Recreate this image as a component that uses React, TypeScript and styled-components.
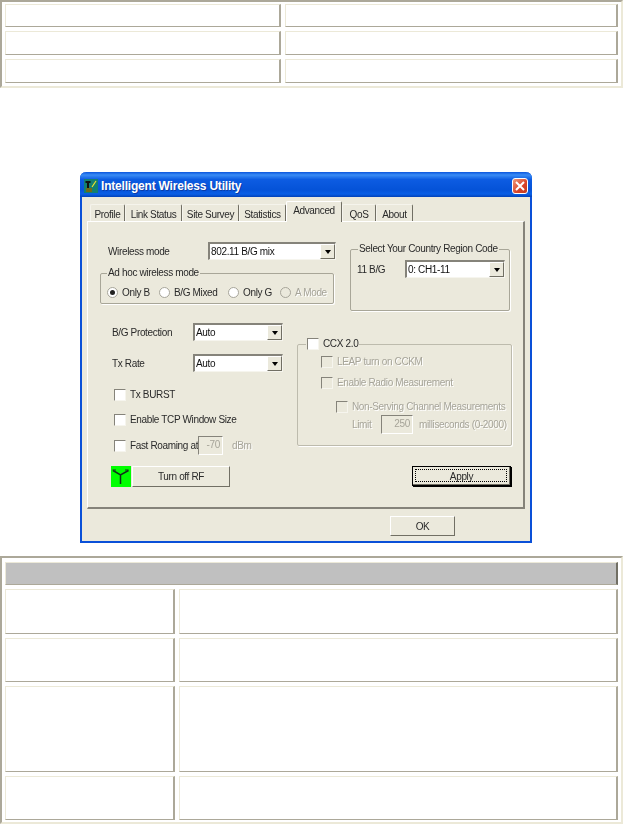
import React from 'react';
import styled, { createGlobalStyle } from 'styled-components';

const Global = createGlobalStyle`
  html, body {
    margin: 0;
    padding: 0;
    background: #fff;
  }
`;

const Page = styled.div`
  width: 623px;
  height: 824px;
  overflow: hidden;
`;

// old style html tables with outset borders
const OuterTable = styled.div<{ $h: number; $top: number; $columns: string; $padTop: number }>`
  box-sizing: border-box;
  height: ${p => p.$h}px;
  margin-top: ${p => p.$top}px;
  padding: ${p => p.$padTop}px 3px 0;
  border-top: 2px solid #aca899;
  border-left: 2px solid #aca899;
  border-right: 2px solid #ece9d8;
  border-bottom: 2px solid #ece9d8;
  display: grid;
  gap: 4px;
  grid-template-columns: ${p => p.$columns};
  grid-auto-rows: min-content;
`;

const Cell = styled.div<{ $h: number; $wide?: boolean }>`
  box-sizing: border-box;
  height: ${p => p.$h}px;
  grid-column: ${p => (p.$wide ? '1 / -1' : 'auto')};
  border-top: 1px solid #ece9d8;
  border-left: 1px solid #ece9d8;
  border-right: 2px solid #aca899;
  border-bottom: 1px solid #aca899;
  background: #fff;
`;

const HeadCell = styled(Cell)`
  background: #c0c0c0;
  border-right-color: #716f64;
`;

const Shot = styled.div`
  display: flex;
  justify-content: center;
  margin-top: 84px;
  padding-right: 12px;
  padding-left: 1px;
`;

const Win = styled.div`
  box-sizing: border-box;
  width: 452px;
  height: 371px;
  background: #ebe9dc;
  border: 2px solid #0a50d8;
  border-top: 0;
  border-radius: 6px 6px 0 0;
  display: flex;
  flex-direction: column;
  font-family: "Liberation Sans", Arial, sans-serif;
  font-size: 10px;
  letter-spacing: -0.35px;
  line-height: 13px;
  color: #2a2a2a;
  filter: blur(0.35px);
`;

const TitleBar = styled.div`
  height: 25px;
  margin: 0 -2px;
  border-radius: 6px 6px 0 0;
  background: linear-gradient(180deg, #0a55dd 0%, #3a8cf5 12%, #0d5ce2 30%, #0553d8 70%, #0a5fe6 88%, #0242b8 100%);
  display: flex;
  align-items: center;
  padding: 2px 4px 0 4px;
  gap: 3px;
  flex: none;
  box-sizing: border-box;
`;

const TitleText = styled.div`
  color: #fff;
  font-weight: bold;
  font-size: 12px;
  letter-spacing: -0.2px;
  margin-top: 2px;
  text-shadow: 1px 1px 0 #0a3ca8;
  flex: 1;
`;

const CloseBtn = styled.div`
  box-sizing: border-box;
  width: 16px;
  height: 16px;
  border: 1px solid #fff;
  border-radius: 3px;
  background: linear-gradient(135deg, #f09878, #d8442a 60%, #c03a20);
  display: flex;
  align-items: center;
  justify-content: center;
`;

const Body = styled.div`
  flex: 1;
  padding: 6px 5px 0 5px;
  display: flex;
  flex-direction: column;
`;

const TabRow = styled.div`
  display: flex;
  height: 18px;
  padding-left: 3px;
  position: relative;
  z-index: 1;
`;

const Tab = styled.div<{ $w: number; $active?: boolean }>`
  box-sizing: border-box;
  width: ${p => p.$w}px;
  height: ${p => (p.$active ? 21 : 17)}px;
  margin-top: ${p => (p.$active ? -2 : 1)}px;
  padding-top: ${p => (p.$active ? 2 : 3)}px;
  text-align: center;
  background: #ebe9dc;
  border-top: 1px solid ${p => (p.$active ? '#fff' : '#f5f4ec')};
  border-left: 1px solid ${p => (p.$active ? '#fff' : '#f5f4ec')};
  border-right: 1px solid #716f64;
  border-radius: 2px 2px 0 0;
  white-space: nowrap;
`;

const Panel = styled.div`
  box-sizing: border-box;
  width: 438px;
  height: 288px;
  border: 1px solid #fff;
  border-right: 2px solid #85837a;
  border-bottom: 2px solid #85837a;
  padding: 20px 0 0 12px;
`;

const TopSection = styled.div`
  display: grid;
  grid-template-columns: 234px 1fr;
  column-gap: 16px;
  height: 69px;
`;

const BottomSection = styled.div`
  display: grid;
  grid-template-columns: 197px 1fr;
`;

const Col = styled.div`
  display: flex;
  flex-direction: column;
`;

const Row = styled.div<{ $gap?: number; $top?: number; $left?: number }>`
  display: flex;
  align-items: center;
  gap: ${p => p.$gap ?? 0}px;
  margin-top: ${p => p.$top ?? 0}px;
  margin-left: ${p => p.$left ?? 0}px;
`;

const Label = styled.span<{ $w?: number; $off?: boolean; $left?: number }>`
  display: inline-block;
  width: ${p => (p.$w ? `${p.$w}px` : 'auto')};
  margin-left: ${p => p.$left ?? 0}px;
  flex: none;
  white-space: nowrap;
  color: ${p => (p.$off ? '#a6a499' : '#2a2a2a')};
  text-shadow: ${p => (p.$off ? '1px 1px 0 #fff' : 'none')};
`;

const Select = styled.div<{ $w: number }>`
  box-sizing: border-box;
  width: ${p => p.$w}px;
  height: 18px;
  flex: none;
  background: #fff;
  border-top: 2px solid #85837a;
  border-left: 2px solid #85837a;
  border-right: 1px solid #f6f5ee;
  border-bottom: 1px solid #f6f5ee;
  display: flex;
  align-items: center;
  justify-content: space-between;
  padding-left: 1px;
  color: #111;
`;

const Arrow = styled.div`
  box-sizing: border-box;
  width: 15px;
  height: 15px;
  background: #ebe9dc;
  border: 1px solid;
  border-color: #fff #716f64 #716f64 #fff;
  display: flex;
  align-items: center;
  justify-content: center;
  &::after {
    content: '';
    border: 3.5px solid transparent;
    border-top: 4px solid #000;
    border-bottom: 0;
  }
`;

const Group = styled.div<{ $w: number; $h: number; $top?: number; $left?: number; $faint?: boolean }>`
  box-sizing: border-box;
  position: relative;
  width: ${p => p.$w}px;
  height: ${p => p.$h}px;
  margin-top: ${p => p.$top ?? 0}px;
  margin-left: ${p => p.$left ?? 0}px;
  border: 1px solid ${p => (p.$faint ? '#bdbbad' : '#a8a698')};
  box-shadow: 1px 1px 0 #fff;
  border-radius: 2px;
`;

const Legend = styled.div<{ $left: number }>`
  position: absolute;
  top: -8px;
  left: ${p => p.$left}px;
  padding: 0 1px;
  background: #ebe9dc;
  white-space: nowrap;
  display: flex;
  align-items: center;
`;

const Radio = styled.span<{ $on?: boolean; $off?: boolean }>`
  box-sizing: border-box;
  width: 11px;
  height: 11px;
  flex: none;
  border-radius: 50%;
  border: 1px solid #a6a499;
  background: ${p => (p.$off ? '#ebe9dc' : '#fff')};
  display: flex;
  align-items: center;
  justify-content: center;
  margin-right: 4px;
  &::after {
    content: '';
    display: ${p => (p.$on ? 'block' : 'none')};
    width: 5px;
    height: 5px;
    border-radius: 50%;
    background: #222;
  }
`;

const Check = styled.span<{ $off?: boolean }>`
  box-sizing: border-box;
  width: 12px;
  height: 12px;
  flex: none;
  background: ${p => (p.$off ? '#ebe9dc' : '#fff')};
  border: 1px solid #85837a;
  border-right-color: #f6f5ee;
  border-bottom-color: #f6f5ee;
  margin-right: 4px;
`;

const NumBox = styled.div<{ $w: number }>`
  box-sizing: border-box;
  width: ${p => p.$w}px;
  height: 19px;
  flex: none;
  border: 1px solid #85837a;
  border-right-color: #fff;
  border-bottom-color: #fff;
  background: #ebe9dc;
  color: #a6a499;
  text-align: right;
  padding-right: 2px;
  line-height: 16px;
`;

const Btn = styled.div<{ $w: number; $h: number; $focus?: boolean; $left?: number; $top?: number }>`
  box-sizing: border-box;
  width: ${p => p.$w}px;
  height: ${p => p.$h}px;
  flex: none;
  margin-left: ${p => p.$left ?? 0}px;
  margin-top: ${p => p.$top ?? 0}px;
  background: #ebe9dc;
  border: 1px solid;
  border-color: ${p => (p.$focus ? '#000' : '#fff #716f64 #716f64 #fff')};
  box-shadow: ${p => (p.$focus ? 'inset -1px -1px 0 #716f64, 1px 1px 0 #000' : 'none')};
  display: flex;
  align-items: center;
  justify-content: center;
  position: relative;
  &::before {
    content: '';
    display: ${p => (p.$focus ? 'block' : 'none')};
    position: absolute;
    inset: 2px 3px 3px 2px;
    border: 1px dotted #000;
  }
`;

const AntennaTile = styled.div`
  width: 20px;
  height: 21px;
  flex: none;
  background: #00ff00;
  margin-right: 1px;
`;

const Footer = styled.div`
  display: flex;
  justify-content: flex-end;
  padding: 7px 70px 0 0;
`;

const TitleIcon = () => (
  <svg width="14" height="14" viewBox="0 0 14 14">
    <rect width="14" height="14" fill="#127f72" />
    <rect x="2" y="9" width="6" height="4" fill="#6f6a18" />
    <rect x="3" y="2" width="2" height="7" fill="#111" />
    <rect x="1.5" y="2" width="5" height="2" fill="#111" />
    <path d="M8 8 L12 2" stroke="#f2e22a" strokeWidth="1.2" />
  </svg>
);

const CloseIcon = () => (
  <svg width="10" height="10" viewBox="0 0 10 10">
    <path d="M1 1 L9 9 M9 1 L1 9" stroke="#fff" strokeWidth="2" />
  </svg>
);

const AntennaIcon = () => (
  <svg width="20" height="21" viewBox="0 0 20 21">
    <path d="M9.5 9 V18 M2 4.5 L9.5 9 L17.5 4.5" stroke="#10301a" strokeWidth="1.5" fill="none" />
    <path d="M1.5 4 H5 M14 4 H17.5" stroke="#10301a" strokeWidth="1" />
  </svg>
);

const tabs: [string, number, boolean?][] = [
  ['Profile', 35],
  ['Link Status', 57],
  ['Site Survey', 57],
  ['Statistics', 47],
  ['Advanced', 56, true],
  ['QoS', 34],
  ['About', 37],
];

const App = () => {
  return (
    <Page>
      <Global />
      <OuterTable $h={88} $top={0} $padTop={2} $columns="276px 333px">
        <Cell $h={23} />
        <Cell $h={23} />
        <Cell $h={24} />
        <Cell $h={24} />
        <Cell $h={24} />
        <Cell $h={24} />
      </OuterTable>

      <Shot>
        <Win>
          <TitleBar>
            <TitleIcon />
            <TitleText>Intelligent Wireless Utility</TitleText>
            <CloseBtn><CloseIcon /></CloseBtn>
          </TitleBar>
          <Body>
            <TabRow>
              {tabs.map(([name, w, active]) => (
                <Tab key={name} $w={w} $active={active}>{name}</Tab>
              ))}
            </TabRow>
            <Panel>
              <TopSection>
                <Col>
                  <Row $left={8}>
                    <Label $w={100}>Wireless mode</Label>
                    <Select $w={128}>802.11 B/G mix<Arrow /></Select>
                  </Row>
                  <Group $w={234} $h={31} $top={13}>
                    <Legend $left={6}>Ad hoc wireless mode</Legend>
                    <Row $left={6} $top={12}>
                      <Radio $on /><Label $w={37}>Only B</Label>
                      <Radio /><Label $w={54}>B/G Mixed</Label>
                      <Radio /><Label $w={37}>Only G</Label>
                      <Radio $off /><Label $off>A Mode</Label>
                    </Row>
                  </Group>
                </Col>
                <Group $w={160} $h={62} $top={7}>
                  <Legend $left={7}>Select Your Country Region Code</Legend>
                  <Row $left={6} $top={10}>
                    <Label $w={48}>11 B/G</Label>
                    <Select $w={100}>0: CH1-11<Arrow /></Select>
                  </Row>
                </Group>
              </TopSection>
              <BottomSection>
                <Col>
                  <Row $left={12} $top={12}>
                    <Label $w={81}>B/G Protection</Label>
                    <Select $w={90}>Auto<Arrow /></Select>
                  </Row>
                  <Row $left={12} $top={13}>
                    <Label $w={81}>Tx Rate</Label>
                    <Select $w={90}>Auto<Arrow /></Select>
                  </Row>
                  <Row $left={14} $top={16}>
                    <Check /><Label>Tx BURST</Label>
                  </Row>
                  <Row $left={14} $top={12}>
                    <Check /><Label>Enable TCP Window Size</Label>
                  </Row>
                  <Row $left={14} $top={10}>
                    <Check /><Label $w={68}>Fast Roaming at</Label>
                    <NumBox $w={25}>-70</NumBox>
                    <Label $off $left={9}>dBm</Label>
                  </Row>
                  <Row $left={11} $top={11}>
                    <AntennaTile><AntennaIcon /></AntennaTile>
                    <Btn $w={98} $h={21}>Turn off RF</Btn>
                  </Row>
                </Col>
                <Col>
                  <Group $w={215} $h={102} $top={33} $faint>
                    <Legend $left={8}>
                      <Check /><Label>CCX 2.0</Label>
                    </Legend>
                    <Row $left={23} $top={10}>
                      <Check $off /><Label $off>LEAP turn on CCKM</Label>
                    </Row>
                    <Row $left={23} $top={8}>
                      <Check $off /><Label $off>Enable Radio Measurement</Label>
                    </Row>
                    <Row $left={38} $top={11}>
                      <Check $off /><Label $off>Non-Serving Channel Measurements</Label>
                    </Row>
                    <Row $left={54} $top={2}>
                      <Label $off $w={29}>Limit</Label>
                      <NumBox $w={32}>250</NumBox>
                      <Label $off $left={6}>milliseconds (0-2000)</Label>
                    </Row>
                  </Group>
                  <Btn $w={99} $h={20} $left={115} $top={20} $focus>Apply</Btn>
                </Col>
              </BottomSection>
            </Panel>
            <Footer>
              <Btn $w={65} $h={20}>OK</Btn>
            </Footer>
          </Body>
        </Win>
      </Shot>

      <OuterTable $h={268} $top={13} $padTop={4} $columns="170px 439px">
        <HeadCell $h={23} $wide />
        <Cell $h={45} />
        <Cell $h={45} />
        <Cell $h={44} />
        <Cell $h={44} />
        <Cell $h={86} />
        <Cell $h={86} />
        <Cell $h={44} />
        <Cell $h={44} />
      </OuterTable>
    </Page>
  );
};

export default App;
